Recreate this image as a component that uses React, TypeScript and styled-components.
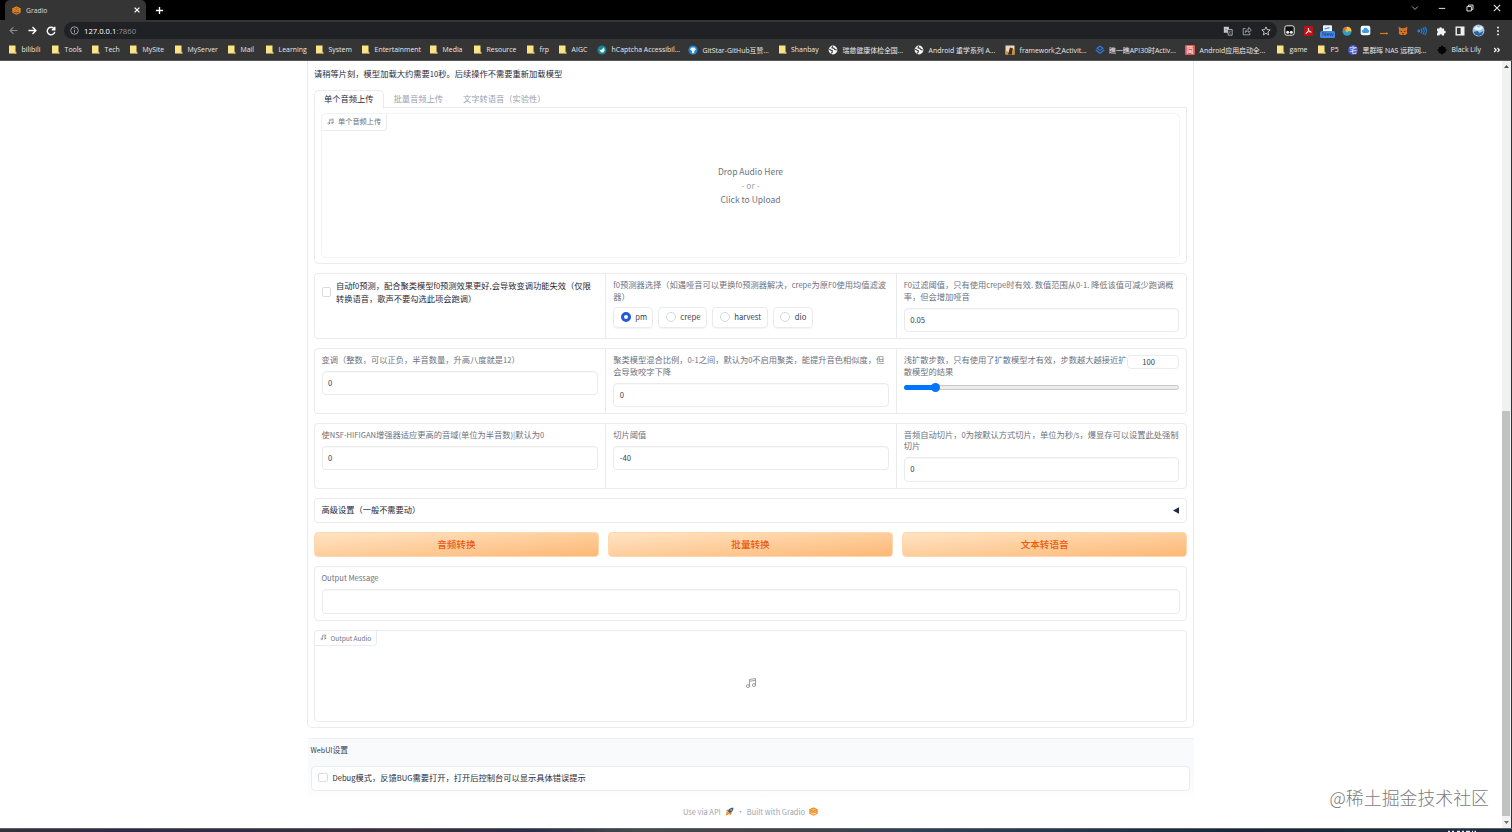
import React from "react";
import styled, { createGlobalStyle, css } from "styled-components";

const GlobalStyle = createGlobalStyle`
  *, *::before, *::after { box-sizing: border-box; }
  body { margin: 0; background: #fff; }
`;

const pageFont = `"Noto Sans CJK SC", "Noto Sans", sans-serif`;
const chromeFont = `"Open Sans", "Noto Sans CJK SC", sans-serif`;
const line = "#e9ebee";

const Screen = styled.div`
  width: 1512px;
  height: 832px;
  display: flex;
  flex-direction: column;
  overflow: hidden;
  position: relative;
  background: #fff;
  font-family: ${pageFont};
`;

/* ---------- browser window ---------- */

const TabStrip = styled.header`
  flex: none;
  height: 20px;
  background: #000;
  display: flex;
  align-items: center;
  padding-left: 5px;
  font-family: ${chromeFont};
  color: #fff;
`;

const BrowserTab = styled.div`
  width: 141px;
  height: 20px;
  background: #353536;
  border-radius: 5px 5px 0 0;
  display: flex;
  align-items: center;
  padding: 0 5px 0 7px;
  gap: 5px;
  font-size: 6.8px;
  color: #dcdcdc;
`;

const TabTitle = styled.span`
  flex: 1;
`;

const NewTab = styled.div`
  margin-left: 9px;
  display: flex;
`;

const WindowControls = styled.div`
  margin-left: auto;
  display: flex;
  height: 16px;
  align-self: flex-start;
  padding-right: 2px;
`;

const Slot = styled.div<{ $w: number }>`
  width: ${(p) => p.$w}px;
  flex: none;
  display: flex;
  align-items: center;
  justify-content: center;
  position: relative;
`;

const Toolbar = styled.div`
  flex: none;
  height: 21px;
  background: #353536;
  display: flex;
  align-items: center;
  padding-left: 3.5px;
  font-family: ${chromeFont};
`;

const Omnibox = styled.div`
  margin-left: 3.5px;
  width: 1213px;
  height: 17px;
  border-radius: 9px;
  background: #1f2124;
  display: flex;
  align-items: center;
  padding: 0 1.5px 0 6px;
  color: #fff;
  font-size: 7.7px;
`;

const Url = styled.span`
  flex: 1;
  padding-left: 5px;
  span { color: #8f9194; }
`;

const Extensions = styled.div`
  margin-left: 3.5px;
  display: flex;
`;

const NewBadge = styled.span`
  position: absolute;
  left: 2px;
  top: 6.5px;
  width: 15px;
  height: 7px;
  border-radius: 1.5px;
  background: #4285e8;
  color: #16376e;
  font-size: 5.6px;
  line-height: 6.5px;
  text-align: center;
`;

const Bookmarks = styled.nav`
  flex: none;
  height: 20px;
  background: #353536;
  border-bottom: 1px solid #57575a;
  display: flex;
  align-items: center;
  padding: 0 0 2px 8px;
  font-family: ${chromeFont};
  font-size: 6.9px;
  color: #e9e9e9;
`;

const Bookmark = styled.div<{ $w: number }>`
  width: ${(p) => p.$w}px;
  flex: none;
  display: flex;
  align-items: center;
  gap: 4.6px;
  white-space: nowrap;
  svg { flex: none; }
`;

/* ---------- page ---------- */

const Viewport = styled.div`
  flex: none;
  height: 767px;
  display: flex;
  background: #fff;
  border-right: 1px solid #2b3138;
  overflow: hidden;
`;

const Page = styled.main`
  flex: 1;
  display: flex;
  flex-direction: column;
  align-items: center;
  padding-right: 1px;
  color: #374151;
`;

const Scrollbar = styled.div`
  width: 9px;
  background: #f1f1f1;
  display: flex;
  flex-direction: column;
  align-items: center;
  justify-content: space-between;
  padding: 4px 1px 4px 0;
`;

const ScrollThumb = styled.div`
  width: 8px;
  height: 405px;
  margin-top: 338px;
  background: #c1c1c1;
`;

/* Latin runs are set a little smaller than the Chinese glyphs around them. */
const Latin = styled.span`
  font-size: 0.92em;
`;

const Mixed = ({ children }: { children: string }) => (
  <>
    {children.split(/([!-~]+(?: [!-~]+)*)/).map((part, i) =>
      i % 2 ? <Latin key={i}>{part}</Latin> : part
    )}
  </>
);

const MainCard = styled.section`
  width: 887px;
  height: 667px;
  flex: none;
  border: 1px solid ${line};
  border-top: 0;
  border-radius: 0 0 5px 5px;
  padding: 6px 6px 0;
  display: flex;
  flex-direction: column;
`;

const Hint = styled.p`
  margin: 0;
  height: 23px;
  line-height: 13px;
  font-size: 8.27px;
  color: #1f2937;
`;

const Tabs = styled.div`
  display: flex;
  height: 18px;
  position: relative;
  margin-bottom: -1px;
`;

const TabButton = styled.div<{ $active?: boolean }>`
  height: 19px;
  padding: 0 9px;
  line-height: 15.4px;
  font-size: 8.25px;
  white-space: nowrap;
  border: 1px solid transparent;
  color: #9ca3af;
  ${(p) =>
    p.$active &&
    css`
      color: #1f2937;
      background: #fff;
      border-color: ${line};
      border-bottom-color: #fff;
      border-radius: 5px 5px 0 0;
    `}
`;

const TabPanel = styled.div`
  height: 157px;
  border: 1px solid ${line};
  border-radius: 0 0 5px 5px;
  padding: 5px 6px 4px;
`;

const UploadBox = styled.div`
  height: 145px;
  border: 1px solid #f2f3f5;
  border-radius: 5px;
  display: flex;
  flex-direction: column;
`;

const BlockLabel = styled.div<{ $size: number; $h: number }>`
  align-self: flex-start;
  height: ${(p) => p.$h}px;
  display: flex;
  align-items: center;
  gap: 4px;
  padding: 0 4.4px 1px 5px;
  font-size: ${(p) => p.$size}px;
  color: #6b7280;
  border: solid ${line};
  border-width: 0 1px 1px 0;
  border-radius: 0 0 4px 0;
`;

const DropText = styled.div`
  padding-top: 33.5px;
  text-align: center;
  font-size: 8.5px;
  line-height: 14.2px;
  color: #6b7280;
  span { color: #9ca3af; }
`;

const FormRow = styled.div`
  flex: none;
  height: 65.5px;
  margin-top: 9.4px;
  display: grid;
  grid-template-columns: repeat(3, 1fr);
  border: 1px solid ${line};
  border-radius: 4px;
`;

const Field = styled.div`
  padding: 4.7px 7px 0 6.5px;
  min-width: 0;
  & + & { border-left: 1px solid ${line}; padding-left: 7px; }
`;

const FieldLabel = styled.div`
  font-size: 8.26px;
  line-height: 11.6px;
  color: #6b7280;
  white-space: nowrap;
`;

const TextInput = styled.div`
  margin-top: 5.4px;
  height: 24.4px;
  border: 1px solid ${line};
  border-radius: 4px;
  box-shadow: inset 0 1px 1px rgba(0, 0, 0, 0.03);
  padding: 0 5.5px;
  font-size: 7.7px;
  line-height: 21.6px;
  color: #374151;
`;

const CheckRow = styled.div<{ $gap: number }>`
  display: flex;
  align-items: center;
  gap: ${(p) => p.$gap}px;
  font-size: 8.26px;
  line-height: 12.4px;
  color: #1f2937;
  white-space: nowrap;
`;

const Checkbox = styled.span`
  width: 9.5px;
  height: 9.5px;
  flex: none;
  border: 1px solid #d9dce1;
  border-radius: 2px;
  background: #fff;
`;

const RadioGroup = styled.div`
  display: flex;
  gap: 5px;
  margin-top: 4.8px;
`;

const RadioOption = styled.div<{ $w: number }>`
  width: ${(p) => p.$w}px;
  height: 20.5px;
  display: flex;
  align-items: center;
  gap: 4.5px;
  padding: 0 0 1px 6.5px;
  border: 1px solid ${line};
  border-radius: 4px;
  box-shadow: 0 1px 1px rgba(0, 0, 0, 0.04);
  font-size: 7.7px;
  color: #374151;
`;

const RadioDot = styled.span<{ $on?: boolean }>`
  width: 10px;
  height: 10px;
  flex: none;
  border-radius: 50%;
  border: ${(p) => (p.$on ? "3px solid #2459dc" : "1px solid #d5d9de")};
  background: #fff;
`;

const SliderHead = styled.div`
  display: flex;
  ${FieldLabel} { width: 223.5px; }
`;

const SliderNumber = styled.div`
  flex: 1;
  height: 14px;
  margin-top: 1px;
  border: 1px solid ${line};
  border-radius: 4px;
  font-size: 7.7px;
  line-height: 11px;
  color: #374151;
  padding-left: 14px;
`;

const SliderTrack = styled.div`
  height: 5px;
  margin-top: 8px;
  border-radius: 3px;
  border: 1px solid #c9c9c9;
  background: #ececec;
  display: flex;
  align-items: center;
`;

const SliderFill = styled.div`
  width: 31px;
  height: 5px;
  flex: none;
  margin-left: -1px;
  border-radius: 3px;
  background: #0075ff;
`;

const SliderThumb = styled.div`
  width: 9px;
  height: 9px;
  flex: none;
  border-radius: 50%;
  margin-left: -4px;
  background: #0075ff;
`;

const Accordion = styled.div`
  flex: none;
  height: 25px;
  margin-top: 9.2px;
  display: flex;
  align-items: center;
  justify-content: space-between;
  border: 1px solid ${line};
  border-radius: 4px;
  padding: 0 7px 2px 6.5px;
  font-size: 8.24px;
  color: #1f2937;
  svg { margin-top: 2px; }
`;

const ButtonRow = styled.div`
  flex: none;
  display: grid;
  grid-template-columns: repeat(3, 1fr);
  gap: 9.4px;
  margin-top: 9.2px;
`;

const PrimaryButton = styled.div`
  height: 25px;
  border-radius: 4px;
  border: 1px solid #fed7aa;
  background: linear-gradient(to bottom right, #ffe4c4, #fdb875);
  color: #ea580c;
  font-size: 9.6px;
  font-weight: 500;
  line-height: 22.5px;
  text-align: center;
`;

const OutputBlock = styled.div`
  flex: none;
  height: 55px;
  margin-top: 9.2px;
  border: 1px solid ${line};
  border-radius: 4px;
  padding: 5px 6.5px;
`;

const AudioBlock = styled.div`
  flex: none;
  height: 92px;
  margin-top: 9.2px;
  border: 1px solid ${line};
  border-radius: 4px;
  display: flex;
  flex-direction: column;
`;

const AudioEmpty = styled.div`
  display: flex;
  justify-content: center;
  padding-top: 31px;
  color: #8b9099;
`;

const Settings = styled.section`
  width: 886px;
  height: 60px;
  flex: none;
  margin-top: 10px;
  border-top: 1px solid #eef0f3;
  background: linear-gradient(#f9fafc 55%, #fefefe);
  padding: 4.5px 4px 0 3px;
  font-size: 7.8px;
  line-height: 12px;
  color: #374151;
`;

const DebugBox = styled.div`
  margin-top: 10.2px;
  height: 25.5px;
  border: 1px solid ${line};
  border-radius: 4px;
  background: #fff;
  display: flex;
  align-items: center;
  padding: 0 0 1.5px 6.5px;
`;

const Footer = styled.footer`
  margin-top: 6px;
  height: 14px;
  display: flex;
  align-items: center;
  font-size: 7.45px;
  color: #9ca3af;
  white-space: nowrap;
`;

const FooterGap = styled.span<{ $w: number }>`
  width: ${(p) => p.$w}px;
  text-align: center;
`;

const Watermark = styled.div`
  position: absolute;
  right: 23px;
  bottom: 22px;
  font-size: 17.9px;
  line-height: 26px;
  font-weight: 300;
  color: #7c7c7c;
  white-space: nowrap;
`;

const Taskbar = styled.div`
  flex: 1;
  border-top: 1px solid #5d6268;
  background: linear-gradient(90deg, #33343a 0, #2c2a45 8%, #3a2f3d 27%, #2b2c48 35%, #454a4b 42%, #434246 52%, #2e4256 60%, #20364b 72%, #172738 82%, #1b2d3e 100%);
  display: flex;
  align-items: flex-end;
  justify-content: flex-end;
  padding-right: 36px;
`;

/* ---------- icons ---------- */

const Folder = () => (
  <svg width="9" height="9" viewBox="0 0 9 9">
    <path d="M1 .5h6.5v6.3l.8.8v1H1z" fill="#fbe38a" />
    <path d="M6.6 6.8h1.7v1.8H6.6z" fill="#e5bf52" />
  </svg>
);

const Globe = () => (
  <svg width="10" height="10" viewBox="0 0 10 10">
    <circle cx="5" cy="5" r="4.4" fill="#f4f4f4" />
    <path d="M1.2 4.2l2 1.1 1 .3v1.7l-1.1 1M4.6 1.2l-.6 1.6 1.8.5 1.1 1.3 1.8.3" fill="none" stroke="#353536" strokeWidth="1.1" />
  </svg>
);

const HCaptcha = () => (
  <svg width="10" height="10" viewBox="0 0 10 10">
    <circle cx="5" cy="5" r="4.6" fill="#15868f" />
    <path d="M2.2 4.4l1.9.6 2.9-2.8.7 3.2-1.4 2.2H4z" fill="#e9fbfb" />
  </svg>
);

const GitStar = () => (
  <svg width="10" height="10" viewBox="0 0 10 10">
    <circle cx="5" cy="5" r="4.6" fill="#2484d6" />
    <path d="M3.4 2.6h3.2L8 4.6 6.2 6v2.2H4V6L2 4.6z" fill="#f2f9ff" />
  </svg>
);

const Picture = () => (
  <svg width="10" height="10" viewBox="0 0 10 10">
    <path d="M.5.5h9v9h-9z" fill="#e7d9bd" />
    <path d="M5 2.5l3 1-1 6H2.8L4 6z" fill="#4a2c18" />
    <path d="M.5 6l2.8.7-.8 2.8h-2zM7.4 5l2.1-1v5.5H7z" fill="#d88a2e" />
  </svg>
);

const Diamonds = () => (
  <svg width="10" height="10" viewBox="0 0 10 10" fill="none" stroke="#2f7de0" strokeWidth="1.1">
    <path d="M5 1.2l3 2.1-3 2.1-3-2.1z" />
    <path d="M.8 5l4.2 3.2L9.2 5" />
  </svg>
);

const Glyph = styled.span<{ $bg: string; $round?: boolean }>`
  width: 10px;
  height: 10px;
  flex: none;
  background: ${(p) => p.$bg};
  border-radius: ${(p) => (p.$round ? "50%" : "1px")};
  color: #fff;
  font-size: 7.5px;
  line-height: 10px;
  text-align: center;
`;

const BlackDiamond = () => (
  <svg width="10" height="10" viewBox="0 0 10 10">
    <path d="M5 .3L6.7 2l1.6.2.2 1.5L9.8 5 8.4 6.5l-.2 1.6-1.6.2L5 9.7 3.4 8.3l-1.6-.2-.2-1.6L.2 5l1.4-1.4.2-1.5L3.4 2z" fill="#050505" />
  </svg>
);

const GradioLogo = ({ size = 9 }: { size?: number }) => (
  <svg width={size} height={size} viewBox="0 0 10 10" fill="none" stroke="#ef8a1d" strokeWidth="1.2">
    <path d="M5 1l4 2-4 2.1L1 3zM1 3v1.8l4 2.1 4-2.1V3M1 5.4v1.7l4 2 4-2V5.4" />
    <path d="M3 2.2l4 2M7 2.2l-4 2" strokeWidth=".8" />
  </svg>
);

const Music = ({ size }: { size: number }) => (
  <svg width={size} height={size} viewBox="0 0 24 24" fill="none" stroke="currentColor" strokeWidth="1.7" strokeLinecap="round" strokeLinejoin="round">
    <path d="M9 18V5l12-2v13M9 8.5l12-2" />
    <circle cx="5.8" cy="18.2" r="3.1" />
    <circle cx="17.8" cy="16.2" r="3.1" />
  </svg>
);

const Rocket = () => (
  <svg width="9" height="9" viewBox="0 0 10 10">
    <path d="M4.5 2.6C6 1 7.7.7 9.3.8c.1 1.6-.3 3.3-1.9 4.8L5.6 7.2 2.9 4.5z" fill="#44597c" />
    <path d="M4.5 2.6L2 3.2.9 5l2.200-.2zM7.400 5.600L6.900 8 5.100 9.100l.2-2.200z" fill="#ef7f1a" />
    <path d="M2.700 4.700l2.500 2.500L3.400 8.700.8 9.400l.7-2.700z" fill="#f58f20" />
    <circle cx="6.800" cy="3.200" r=".8" fill="#fff" />
  </svg>
);

const Stroke = ({ d, size = 10, color = "#e8e8e8", w = 1.2 }: { d: string; size?: number; color?: string; w?: number }) => (
  <svg width={size} height={size} viewBox="0 0 10 10" fill="none" stroke={color} strokeWidth={w}>
    <path d={d} />
  </svg>
);

const bookmarks: { label: string; w: number; icon?: React.ReactNode }[] = [
  { label: "bilibili", w: 43 },
  { label: "Tools", w: 40 },
  { label: "Tech", w: 38 },
  { label: "MySite", w: 45 },
  { label: "MyServer", w: 53 },
  { label: "Mail", w: 38 },
  { label: "Learning", w: 50 },
  { label: "System", w: 46 },
  { label: "Entertainment", w: 68 },
  { label: "Media", w: 44 },
  { label: "Resource", w: 53 },
  { label: "frp", w: 32 },
  { label: "AIGC", w: 39 },
  { label: "hCaptcha Accessibil...", w: 91, icon: <HCaptcha /> },
  { label: "GitStar-GitHub互赞...", w: 89.5, icon: <GitStar /> },
  { label: "Shanbay", w: 50.5 },
  { label: "瑞慈健康体检全国...", w: 86, icon: <Globe /> },
  { label: "Android 重学系列 A...", w: 91, icon: <Globe /> },
  { label: "framework之Activit...", w: 89.5, icon: <Picture /> },
  { label: "瞧一瞧API30时Activ...", w: 90.5, icon: <Diamonds /> },
  { label: "Android应用启动全...", w: 91, icon: <Glyph $bg="#e0574f">简</Glyph> },
  { label: "game", w: 41 },
  { label: "P5", w: 31 },
  { label: "黑群晖 NAS 远程网...", w: 89, icon: <Glyph $bg="#4657c9" $round>宅</Glyph> },
  { label: "Black Lily", w: 56, icon: <BlackDiamond /> },
];

const extensions: React.ReactNode[] = [
  <svg width="11" height="11" viewBox="0 0 11 11"><rect x=".8" y=".8" width="9.4" height="9.4" rx="2" fill="#101010" stroke="#e8e8e8" /><circle cx="3.7" cy="7.3" r="1.5" fill="#eee" /><circle cx="7.3" cy="7.3" r="1.5" fill="#eee" /></svg>,
  <svg width="9" height="10" viewBox="0 0 9 10"><rect width="9" height="10" rx="1" fill="#b9131a" /><path d="M4.4 2v2.4L2 7.6l2.5-2 2.8.5-2.6-1.5z" stroke="#fff" strokeWidth=".8" fill="none" /></svg>,
  <><svg width="11" height="11" viewBox="0 0 11 11"><rect x="1" y=".3" width="9" height="9" rx="1" fill="#eef3fa" /><path d="M2.500 4l5-1.400" stroke="#4789e8" strokeWidth="1.200" /></svg><NewBadge>New</NewBadge></>,
  <svg width="10" height="10" viewBox="0 0 10 10"><circle cx="5" cy="5.2" r="4.5" fill="#2b9ec1" /><path d="M.8 3.6A4.5 4.5 0 014.6.7L5 5z" fill="#f0672f" /><path d="M4.6.7a4.5 4.5 0 014.9 4.5L5 5z" fill="#f4c63a" /><circle cx="5" cy="4.6" r="1.6" fill="#e8b34a" /></svg>,
  <svg width="11" height="11" viewBox="0 0 11 11"><rect x=".7" y=".7" width="9.6" height="9.6" rx="2" fill="#f5fbff" /><path d="M3.2 8a1.7 1.7 0 010-3.3 2.5 2.5 0 014.8-.1A1.8 1.8 0 018 8z" fill="#3aa0ee" /></svg>,
  <svg width="10" height="10" viewBox="0 0 10 10"><path d="M1 7.5h8" stroke="#d9781e" strokeWidth="1.2" /><path d="M7 6.2l2 1.3-2 1" fill="#d9781e" /></svg>,
  <svg width="10" height="10" viewBox="0 0 10 10"><path d="M.6.8l3.2 1.4h2.4L9.4.8l-.5 4.4.4 2.4-2 1.4H2.7L.7 7.6l.4-2.4z" fill="#dc7426" /><path d="M2.5 5l1.5.7M7.5 5L6 5.7M4 7.8h2" stroke="#3c2415" strokeWidth=".9" /></svg>,
  <svg width="10" height="10" viewBox="0 0 10 10" fill="none" stroke="#1f86e0" strokeWidth="1.2"><circle cx="1.8" cy="5" r=".8" fill="#1f86e0" /><path d="M3.8 2.6a3.5 3.5 0 010 4.8M5.8 1.6a5 5 0 010 6.8M7.8.8a6.5 6.5 0 010 8.4" /></svg>,
  <svg width="10" height="10" viewBox="0 0 10 10"><path d="M1 2.6h2.3a1.3 1.3 0 112.6 0h2.2v2.2a1.3 1.3 0 110 2.5v2.2H6a1.3 1.3 0 00-2.6 0H1V7.2a1.3 1.3 0 000-2.4z" fill="#f1f1f1" /></svg>,
  <svg width="10" height="10" viewBox="0 0 10 10"><rect x="1.2" y="1.2" width="7.6" height="7.6" fill="none" stroke="#f1f1f1" strokeWidth="1.4" /><path d="M5.6 1h3.2v8H5.6z" fill="#f1f1f1" /></svg>,
  <svg width="13" height="13" viewBox="0 0 13 13"><circle cx="6.5" cy="6.5" r="6" fill="#9cc4e6" /><path d="M1.5 5l3-3 2 2 3-2 1.5 2-3 2.5L5 6z" fill="#f1f7fc" /><path d="M1.5 8l4-1 2 2 4-2-1.5 3.5L7 12l-4-1.5z" fill="#2f6199" /></svg>,
  <svg width="4" height="10" viewBox="0 0 4 10" fill="#e8e8e8"><circle cx="2" cy="1.5" r="1" /><circle cx="2" cy="5" r="1" /><circle cx="2" cy="8.5" r="1" /></svg>,
];

export default function App() {
  return (
    <Screen>
      <GlobalStyle />
      <TabStrip>
        <BrowserTab>
          <GradioLogo />
          <TabTitle>Gradio</TabTitle>
          <Stroke d="M2 2l6 6M8 2l-6 6" size={8} w={1.6} color="#fff" />
        </BrowserTab>
        <NewTab><Stroke d="M5 1v8M1 5h8" size={9} w={1.5} color="#fff" /></NewTab>
        <WindowControls>
          <Slot $w={27}><Stroke d="M1.5 3.2L5 6.8 8.5 3.2" size={8} w={1.1} color="#bbb" /></Slot>
          <Slot $w={27.5}><Stroke d="M1 5.5h8" size={8} /></Slot>
          <Slot $w={27}><Stroke d="M1.2 3.2h5.5v5.5H1.2zM3.2 3V1.3h5.5v5.4H7" size={8} /></Slot>
          <Slot $w={27}><Stroke d="M1 1l8 8M9 1L1 9" size={8} w={1.3} /></Slot>
        </WindowControls>
      </TabStrip>

      <Toolbar>
        <Slot $w={19}><Stroke d="M9.5 5H1.2M5 1.2L1.2 5 5 8.8" size={9} color="#8b8b8b" /></Slot>
        <Slot $w={19}><Stroke d="M.5 5h8.3M5 1.2L8.8 5 5 8.8" size={9} w={1.5} color="#fff" /></Slot>
        <Slot $w={19}><Stroke d="M8.3 3A3.8 3.8 0 108.8 5.8M8.8.8v3H5.8" size={10} w={1.4} color="#fff" /></Slot>
        <Omnibox>
          <Stroke d="M5 .8a4.2 4.2 0 100 8.4A4.2 4.2 0 105 .8M5 4.5v2.8M5 2.6v1" size={9} w={1} color="#a9abae" />
          <Url>127.0.0.1<span>:7860</span></Url>
          <Slot $w={19}>
            <svg width="10" height="10" viewBox="0 0 10 10"><path d="M.8.8h5l1 6h-6z" fill="#c4c6c8" /><path d="M4.5 3.5h4.7v5.7H5.3z" fill="#1f2124" stroke="#c4c6c8" strokeWidth=".8" /><path d="M2 3.6h2M5.8 5.3h2.5M7 5.3L5.9 7.8M6 6.2l2 1.5" stroke="#777" strokeWidth=".7" /></svg>
          </Slot>
          <Slot $w={19}><Stroke d="M3.5 2.5H1.2v6.3h6.6V7M3.3 6.5c.2-2.2 1.5-3.3 3.5-3.3V1.4l2.5 2.7-2.5 2.5V5C5.3 5 4.2 5.3 3.3 6.5z" size={10} w={0.8} color="#b9bbbd" /></Slot>
          <Slot $w={19}><Stroke d="M5 .9l1.2 2.8 3 .2-2.3 2 .8 3L5 7.3 2.3 8.9l.8-3-2.3-2 3-.2z" size={10} w={0.9} color="#cfd1d3" /></Slot>
        </Omnibox>
        <Extensions>
          {extensions.map((icon, i) => (
            <Slot key={i} $w={18.9}>{icon}</Slot>
          ))}
        </Extensions>
      </Toolbar>

      <Bookmarks>
        {bookmarks.map((b, i) => (
          <Bookmark key={i} $w={b.w}>
            {b.icon ?? <Folder />}
            <span>{b.label}</span>
          </Bookmark>
        ))}
        <Stroke d="M1.5 2.5L4 5 1.5 7.5M5.5 2.5L8 5 5.5 7.5" size={8} w={1.4} color="#fff" />
      </Bookmarks>

      <Viewport>
        <Page>
          <MainCard>
            <Hint><Mixed>请稍等片刻，模型加载大约需要10秒。后续操作不需要重新加载模型</Mixed></Hint>
            <Tabs>
              <TabButton $active>单个音频上传</TabButton>
              <TabButton>批量音频上传</TabButton>
              <TabButton>文字转语音（实验性）</TabButton>
            </Tabs>
            <TabPanel>
              <UploadBox>
                <BlockLabel $size={7.2} $h={16.5}><Music size={7} />单个音频上传</BlockLabel>
                <DropText>
                  Drop Audio Here<br /><span>- or -</span><br />Click to Upload
                </DropText>
              </UploadBox>
            </TabPanel>

            <FormRow>
              <Field>
                <CheckRow $gap={5}>
                  <Checkbox />
                  <div>
                    <Mixed>自动f0预测，配合聚类模型f0预测效果更好,会导致变调功能失效（仅限</Mixed><br />
                    转换语音，歌声不要勾选此项会跑调）
                  </div>
                </CheckRow>
              </Field>
              <Field>
                <FieldLabel><Mixed>f0预测器选择（如遇哑音可以更换f0预测器解决，crepe为原F0使用均值滤波</Mixed><br />器）</FieldLabel>
                <RadioGroup>
                  <RadioOption $w={40}><RadioDot $on />pm</RadioOption>
                  <RadioOption $w={49}><RadioDot />crepe</RadioOption>
                  <RadioOption $w={55.5}><RadioDot />harvest</RadioOption>
                  <RadioOption $w={40}><RadioDot />dio</RadioOption>
                </RadioGroup>
              </Field>
              <Field>
                <FieldLabel><Mixed>F0过滤阈值，只有使用crepe时有效. 数值范围从0-1. 降低该值可减少跑调概</Mixed><br />率，但会增加哑音</FieldLabel>
                <TextInput>0.05</TextInput>
              </Field>
            </FormRow>

            <FormRow>
              <Field>
                <FieldLabel><Mixed>变调（整数，可以正负，半音数量，升高八度就是12）</Mixed></FieldLabel>
                <TextInput>0</TextInput>
              </Field>
              <Field>
                <FieldLabel><Mixed>聚类模型混合比例，0-1之间，默认为0不启用聚类，能提升音色相似度，但</Mixed><br />会导致咬字下降</FieldLabel>
                <TextInput>0</TextInput>
              </Field>
              <Field>
                <SliderHead>
                  <FieldLabel>浅扩散步数，只有使用了扩散模型才有效，步数越大越接近扩<br />散模型的结果</FieldLabel>
                  <SliderNumber>100</SliderNumber>
                </SliderHead>
                <SliderTrack><SliderFill /><SliderThumb /></SliderTrack>
              </Field>
            </FormRow>

            <FormRow>
              <Field>
                <FieldLabel><Mixed>使NSF-HIFIGAN增强器适应更高的音域(单位为半音数)|默认为0</Mixed></FieldLabel>
                <TextInput>0</TextInput>
              </Field>
              <Field>
                <FieldLabel>切片阈值</FieldLabel>
                <TextInput>-40</TextInput>
              </Field>
              <Field>
                <FieldLabel><Mixed>音频自动切片，0为按默认方式切片，单位为秒/s，爆显存可以设置此处强制</Mixed><br />切片</FieldLabel>
                <TextInput>0</TextInput>
              </Field>
            </FormRow>

            <Accordion>
              高级设置（一般不需要动）
              <svg width="6" height="7" viewBox="0 0 6 7"><path d="M0 3.5L6 .3v6.4z" fill="#1f2a44" /></svg>
            </Accordion>

            <ButtonRow>
              <PrimaryButton>音频转换</PrimaryButton>
              <PrimaryButton>批量转换</PrimaryButton>
              <PrimaryButton>文本转语音</PrimaryButton>
            </ButtonRow>

            <OutputBlock>
              <FieldLabel><Mixed>Output Message</Mixed></FieldLabel>
              <TextInput />
            </OutputBlock>

            <AudioBlock>
              <BlockLabel $size={6.5} $h={14.5}><Music size={6.5} />Output Audio</BlockLabel>
              <AudioEmpty><Music size={12} /></AudioEmpty>
            </AudioBlock>
          </MainCard>

          <Settings>
            <Mixed>WebUI设置</Mixed>
            <DebugBox>
              <CheckRow $gap={5}>
                <Checkbox />
                <span><Mixed>Debug模式，反馈BUG需要打开，打开后控制台可以显示具体错误提示</Mixed></span>
              </CheckRow>
            </DebugBox>
          </Settings>

          <Footer>
            Use via API<FooterGap $w={4.5} /><Rocket /><FooterGap $w={12.5}>·</FooterGap>Built with Gradio<FooterGap $w={4} /><GradioLogo />
          </Footer>
        </Page>
        <Scrollbar>
          <svg width="5" height="3" viewBox="0 0 5 3"><path d="M0 3L2.5 0 5 3z" fill="#505050" /></svg>
          <ScrollThumb />
          <svg width="5" height="3" viewBox="0 0 5 3"><path d="M0 0l2.5 3L5 0z" fill="#707070" /></svg>
        </Scrollbar>
      </Viewport>

      <Taskbar>
        <svg width="28" height="2" viewBox="0 0 28 2"><path d="M0 1.3h2M4 1.3h2M9 1.3h3M14 1.3h2M18 1.3h4M24 1.3h1M26.5 1.3H28" stroke="#e6e9ec" strokeWidth="1.3" /></svg>
      </Taskbar>
      <Watermark>@稀土掘金技术社区</Watermark>
    </Screen>
  );
}
